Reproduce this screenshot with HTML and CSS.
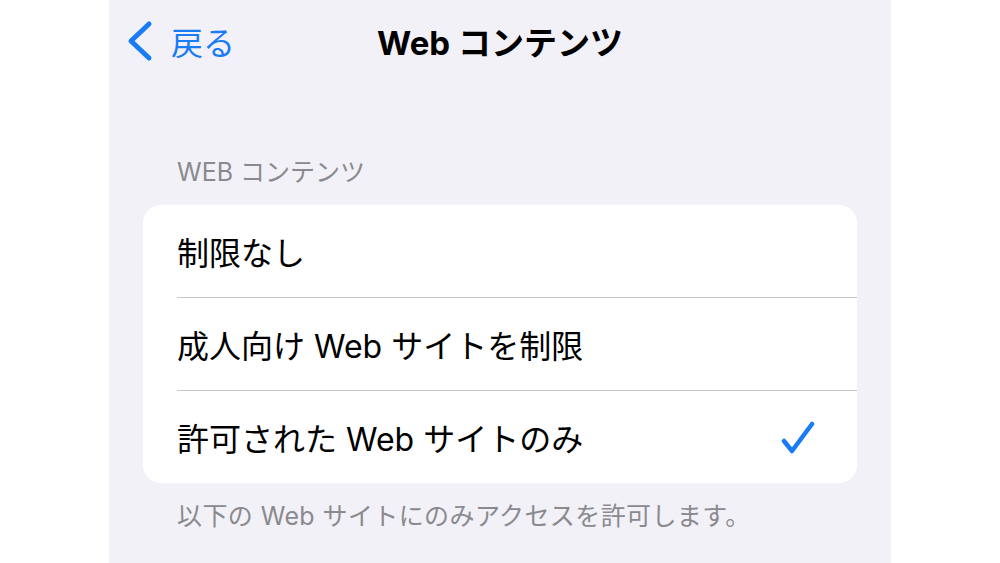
FILE: index.html
```html
<!DOCTYPE html>
<html lang="ja">

<head>
    <meta charset="UTF-8">
    <meta name="viewport" content="width=device-width, initial-scale=1.0">
    <title>Webコンテンツ</title>
    <link rel="stylesheet" href="styles.css">
</head>

<body>
    <div class="phone">
        <div class="navbar">
            <div class="back">
                <svg class="chevron" width="28" height="42" viewBox="0 0 28 42">
                    <path d="M23 4 L5 21 L23 38" fill="none" stroke="#1a7cf4" stroke-width="5" stroke-linecap="round" stroke-linejoin="round"/>
                </svg>
                <span>戻る</span>
            </div>
            <div class="title">Web コンテンツ</div>
            <div></div>
        </div>

        <div class="section-header">WEB コンテンツ</div>

        <div class="card">
            <div class="row">
                <div class="row-body">制限なし</div>
            </div>
            <div class="row">
                <div class="row-body">成人向け Web サイトを制限</div>
            </div>
            <div class="row">
                <div class="row-body">
                    <span>許可された Web サイトのみ</span>
                    <svg class="check" width="34" height="34" viewBox="0 0 34 34">
                        <path d="M3 20 L11 30 L31 3" fill="none" stroke="#1a7cf4" stroke-width="4.5" stroke-linecap="round" stroke-linejoin="round"/>
                    </svg>
                </div>
            </div>
        </div>

        <div class="section-footer">以下の Web サイトにのみアクセスを許可します。</div>
    </div>
</body>

</html>
```

FILE: styles.css
```css
body {
    margin: 0;
    padding: 0;
    background-color: #fff;
    font-family: "Inter", "Noto Sans CJK JP", sans-serif;
}

.phone {
    width: 782px;
    height: 563px;
    margin-left: 109px;
    background-color: #f2f1f7;
    overflow: hidden;
}

.navbar {
    height: 82px;
    display: grid;
    grid-template-columns: 1fr auto 1fr;
    align-items: center;
}

.back {
    display: flex;
    align-items: center;
    gap: 17px;
    padding-left: 17px;
    color: #1a7cf4;
    font-size: 32px;
}

.chevron {
    display: block;
}

.title {
    font-size: 33px;
    font-weight: 700;
    color: #000;
}

.section-header {
    margin-top: 75px;
    padding-left: 68px;
    line-height: 30px;
    font-size: 25px;
    color: #8a8a8e;
}

.card {
    margin: 18px 34px 0;
    background-color: #fff;
    border-radius: 18px;
    overflow: hidden;
}

.row {
    padding-left: 34px;
}

.row-body {
    height: 92px;
    display: flex;
    align-items: center;
    justify-content: space-between;
    padding-right: 42px;
    border-bottom: 1px solid #c8c8cc;
    font-size: 32px;
    color: #000;
}

.row:last-child .row-body {
    border-bottom: none;
}

.check {
    display: block;
    margin-top: 2px;
}

.section-footer {
    margin-top: 18px;
    padding-left: 68px;
    line-height: 30px;
    font-size: 25px;
    letter-spacing: 0.4px;
    color: #8a8a8e;
}
```
